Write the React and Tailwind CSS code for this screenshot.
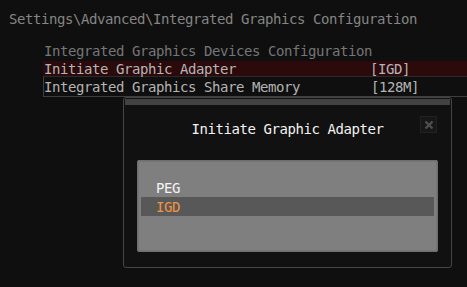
import React from "react";

const items = [
  { label: "Integrated Graphics Devices Configuration", value: "", kind: "header" },
  { label: "Initiate Graphic Adapter", value: "[IGD]", kind: "active" },
  { label: "Integrated Graphics Share Memory", value: "[128M]", kind: "normal" },
];

const options = ["PEG", "IGD"];

const App = () => {
  const selected = "IGD";

  return (
    <div
      className="relative w-[467px] h-[287px] overflow-hidden bg-[#0f0f0f] text-[14px] tracking-[-0.43px] leading-[16px]"
      style={{ fontFamily: '"DejaVu Sans Mono", "Liberation Mono", monospace' }}
    >
      {/* Breadcrumb */}
      <div className="pl-[9px] pt-[11px] text-[#858585] whitespace-nowrap">
        Settings\Advanced\Integrated Graphics Configuration
      </div>

      {/* Menu rows */}
      <div className="ml-[43px] mt-[14px] flex flex-col">
        {items.map((item) => (
          <div
            key={item.label}
            className={`flex items-center whitespace-nowrap ${
              item.kind === "header"
                ? "h-[19px] text-[#767676]"
                : item.kind === "active"
                ? "h-[16px] mt-[1px] bg-[#2c0a0c] text-[#b4b4b4] border-b border-[#2a2a2a]"
                : "h-[20px] text-[#b4b4b4] border-l border-b border-[#3e3e3e]"
            }`}
          >
            <span className={`w-[327px] ${item.kind === "normal" ? "pl-[0px]" : "pl-[1px]"}`}>
              {item.label}
            </span>
            <span>{item.value}</span>
          </div>
        ))}
      </div>

      {/* Popup */}
      <div className="absolute left-[123px] top-[97px] w-[329px] h-[171px] rounded-[3px] border border-[#454545] bg-[#111111] flex flex-col">
        <div className="mx-[1px] mt-[1px] h-[6px] bg-[#161616] bg-[radial-gradient(#424242_0.9px,transparent_1px)] bg-[length:2px_2px]" />
        <div className="relative h-[37px] flex items-center justify-center text-[#f2f2f2]">
          <span className="mt-[10px]">Initiate Graphic Adapter</span>
          <div className="absolute right-[14px] top-[11px] w-[17px] h-[17px] border border-[#222222] bg-[#171717] flex items-center justify-center">
            <svg width="12" height="12" viewBox="0 0 12 12">
              <path d="M2.5 2.5 L9.5 9.5 M9.5 2.5 L2.5 9.5" stroke="#4e4e4e" strokeWidth="2.4" />
            </svg>
          </div>
        </div>
        <div className="mx-[13px] mt-[18px] h-[92px] rounded-[3px] bg-[#7f7f7f] shadow-[inset_0_0_0_1px_#6e6e6e,inset_0_0_0_2px_#767676] pt-[18px] px-[4px]">
          {options.map((opt) => (
            <div
              key={opt}
              className={`h-[19px] flex items-center pl-[15px] ${
                opt === selected ? "bg-[#585858] text-[#f0953e]" : "text-[#f4f4f4]"
              }`}
            >
              {opt}
            </div>
          ))}
        </div>
      </div>
    </div>
  );
};

export default App;
